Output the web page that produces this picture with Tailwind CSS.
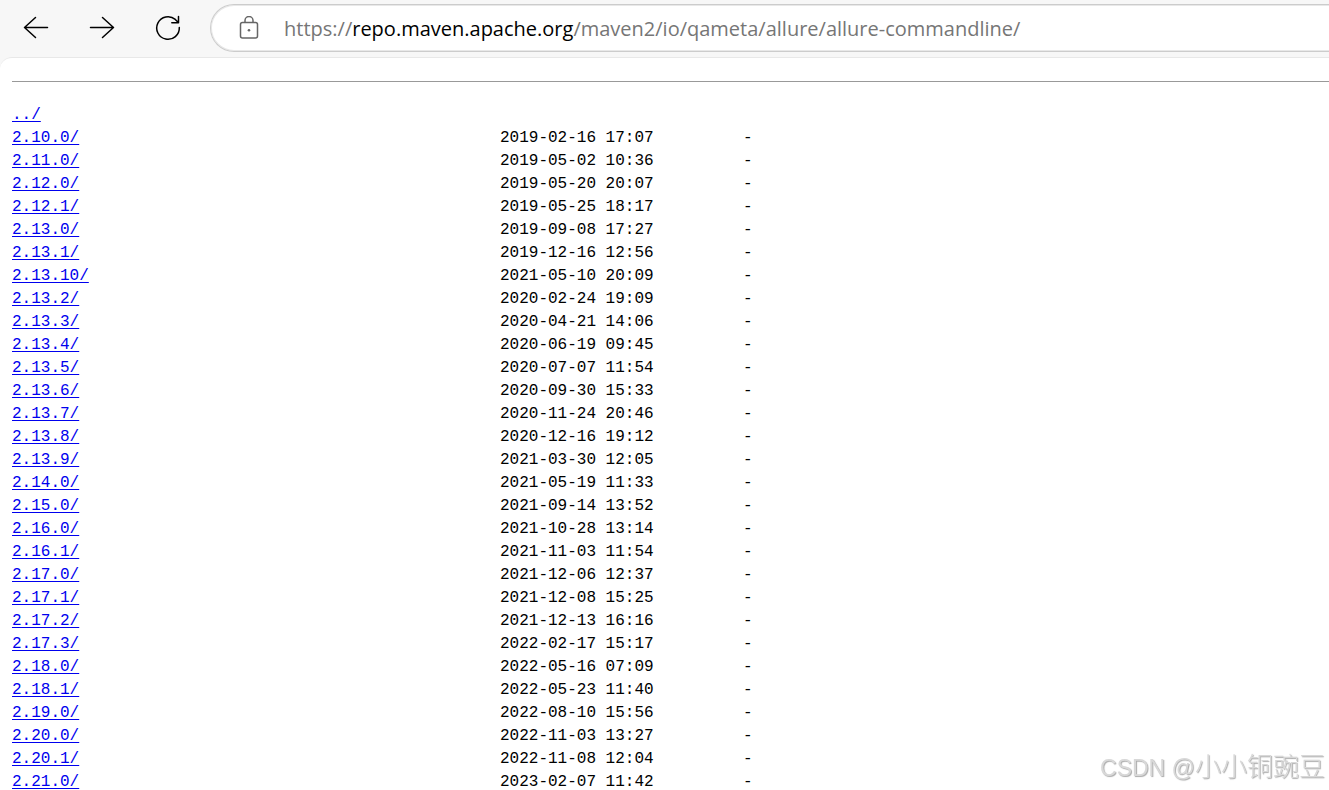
<!DOCTYPE html>
<html lang="en">
<head>
    <meta charset="UTF-8">
    <meta name="viewport" content="width=device-width, initial-scale=1.0">
    <title>Central Repository: io/qameta/allure/allure-commandline</title>
    <script src="https://cdn.jsdelivr.net/npm/@tailwindcss/browser@4"></script>
</head>
<body class="bg-[#f7f7f7] h-screen overflow-hidden flex flex-col">
    <!-- Browser toolbar -->
    <header class="flex items-center pt-1 pb-[5px] pl-5 shrink-0">
        <nav class="flex items-center gap-[34px] text-black">
            <button type="button" aria-label="Back" class="w-8 h-8">
                <svg class="w-8 h-8" viewBox="0 0 32 32" fill="none" stroke="currentColor" stroke-width="1.5" stroke-linecap="round" stroke-linejoin="round"><path d="M27.5 15.5H4.5M15.5 5.5L4.5 15.5l11 10"/></svg>
            </button>
            <button type="button" aria-label="Forward" class="w-8 h-8">
                <svg class="w-8 h-8" viewBox="0 0 32 32" fill="none" stroke="currentColor" stroke-width="1.5" stroke-linecap="round" stroke-linejoin="round"><path d="M4.5 15.5h23M16.5 5.5l11 10-11 10"/></svg>
            </button>
            <button type="button" aria-label="Refresh" class="w-8 h-8">
                <svg class="w-8 h-8" viewBox="0 0 32 32" fill="none" stroke="currentColor" stroke-width="1.5" stroke-linecap="round" stroke-linejoin="round"><path d="M27.3 15.5A11.3 11.3 0 1 1 23.3 7.4L26.3 10.5M26.5 4.5v6.2h-6.7"/></svg>
            </button>
        </nav>
        <div class="flex-1 flex items-center h-12 ml-[26px] -mr-1 pl-[25px] bg-white border border-r-0 border-[#cccccc] inset-ring inset-ring-[#e8e8e8] rounded-l-full">
            <svg class="w-6 h-6 mr-6 shrink-0 text-[#666]" viewBox="0 0 24 24" fill="none" stroke="currentColor" stroke-width="1.5"><rect x="4.5" y="6.5" width="17" height="15.5" rx="2"/><path d="M9 6.5V4.5a4 4 0 0 1 8 0v2"/><circle cx="13" cy="14.3" r="1.3" fill="currentColor" stroke="none"/></svg>
            <div role="textbox" aria-label="Address" contenteditable="true" spellcheck="false" class="flex-1 pt-0.5 whitespace-nowrap font-['Open_Sans','Noto_Sans',sans-serif] text-[20px] leading-6 text-[#767676] outline-none">https://<span class="text-black">repo.maven.apache.org</span>/maven2/io/qameta/allure/allure-commandline/</div>
        </div>
    </header>

    <!-- Directory listing -->
    <main class="flex-1 min-h-0 overflow-hidden bg-white rounded-tl-xl border-t border-[#e8e8e8] pl-3 pt-[23px] font-['Liberation_Mono',monospace] text-[16px] leading-[23px] text-black">
        <hr class="border-t border-[#999] mb-[22px]">
        <a href="../" class="block w-fit text-[#0000ee] underline underline-offset-2">../</a>
        <table class="table-fixed w-[752px] whitespace-nowrap">
            <colgroup>
                <col class="w-[488px]">
                <col class="w-[243px]">
                <col>
            </colgroup>
            <tbody id="listing"></tbody>
        </table>
    </main>

    <div class="fixed right-1 bottom-1 font-['Liberation_Sans','Noto_Sans_CJK_SC',sans-serif] font-light text-[26px] leading-9 text-[#d8d8d8] [text-shadow:1px_1px_1px_#aaa] pointer-events-none"><span class="text-[23px]">CSDN @</span>小小铜豌豆</div>

    <script>
        const versions = [
            ['2.10.0/', '2019-02-16 17:07'],
            ['2.11.0/', '2019-05-02 10:36'],
            ['2.12.0/', '2019-05-20 20:07'],
            ['2.12.1/', '2019-05-25 18:17'],
            ['2.13.0/', '2019-09-08 17:27'],
            ['2.13.1/', '2019-12-16 12:56'],
            ['2.13.10/', '2021-05-10 20:09'],
            ['2.13.2/', '2020-02-24 19:09'],
            ['2.13.3/', '2020-04-21 14:06'],
            ['2.13.4/', '2020-06-19 09:45'],
            ['2.13.5/', '2020-07-07 11:54'],
            ['2.13.6/', '2020-09-30 15:33'],
            ['2.13.7/', '2020-11-24 20:46'],
            ['2.13.8/', '2020-12-16 19:12'],
            ['2.13.9/', '2021-03-30 12:05'],
            ['2.14.0/', '2021-05-19 11:33'],
            ['2.15.0/', '2021-09-14 13:52'],
            ['2.16.0/', '2021-10-28 13:14'],
            ['2.16.1/', '2021-11-03 11:54'],
            ['2.17.0/', '2021-12-06 12:37'],
            ['2.17.1/', '2021-12-08 15:25'],
            ['2.17.2/', '2021-12-13 16:16'],
            ['2.17.3/', '2022-02-17 15:17'],
            ['2.18.0/', '2022-05-16 07:09'],
            ['2.18.1/', '2022-05-23 11:40'],
            ['2.19.0/', '2022-08-10 15:56'],
            ['2.20.0/', '2022-11-03 13:27'],
            ['2.20.1/', '2022-11-08 12:04'],
            ['2.21.0/', '2023-02-07 11:42'],
        ];

        document.getElementById('listing').innerHTML = versions.map(([name, date]) => `
            <tr>
                <td><a href="${name}" class="text-[#0000ee] underline underline-offset-2">${name}</a></td>
                <td>${date}</td>
                <td>-</td>
            </tr>`).join('');
    </script>
</body>
</html>
